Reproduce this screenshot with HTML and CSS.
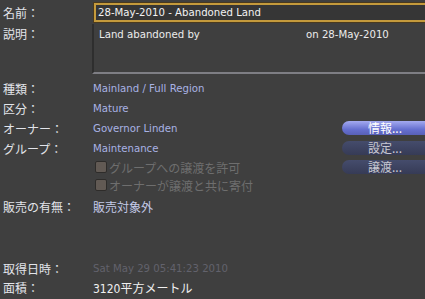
FILE: index.html
```html
<!DOCTYPE html>
<html lang="ja">
<head>
    <meta charset="UTF-8">
    <title>土地情報</title>
    <link rel="stylesheet" href="styles.css">
</head>
<body>
    <div class="panel">
        <div class="row row-name">
            <span class="label">名前：</span>
            <div class="name-field">28-May-2010 - Abandoned Land</div>
        </div>
        <div class="row row-desc">
            <span class="label">説明：</span>
            <div class="desc-field">
                <span class="desc-text">Land abandoned by</span>
                <span>on 28-May-2010</span>
            </div>
        </div>

        <div class="info">
            <div class="line">
                <span class="label">種類：</span>
                <span class="value">Mainland / Full Region</span>
            </div>
            <div class="line">
                <span class="label">区分：</span>
                <span class="value">Mature</span>
            </div>
            <div class="line">
                <span class="label">オーナー：</span>
                <span class="value">Governor Linden</span>
                <button class="btn btn-active">情報...</button>
            </div>
            <div class="line">
                <span class="label">グループ：</span>
                <span class="value">Maintenance</span>
                <button class="btn">設定...</button>
            </div>
            <div class="line line-check">
                <span></span>
                <label class="check"><span class="box"></span>グループへの譲渡を許可</label>
                <button class="btn">譲渡...</button>
            </div>
            <div class="line line-check">
                <span></span>
                <label class="check"><span class="box"></span>オーナーが譲渡と共に寄付</label>
            </div>
            <div class="line line-sale">
                <span class="label">販売の有無：</span>
                <span class="value value-plain">販売対象外</span>
            </div>
            <div class="line line-claim">
                <span class="label">取得日時：</span>
                <span class="value value-off">Sat May 29 05:41:23 2010</span>
            </div>
            <div class="line line-last">
                <span class="label">面積：</span>
                <span class="value value-white">3120平方メートル</span>
            </div>
        </div>
    </div>
</body>
</html>
```

FILE: styles.css
```css
* {
    margin: 0;
    padding: 0;
    box-sizing: border-box;
}

body {
    background: #3f3f3f;
    color: #dcdcdc;
    font-family: 'DejaVu Sans Condensed', 'DejaVu Sans', 'Noto Sans CJK JP', sans-serif;
    font-size: 11.3px;
    overflow: hidden;
}

.panel {
    width: 425px;
    height: 299px;
    padding-top: 2px;
}

.row {
    display: flex;
}

.label {
    width: 92px;
    padding-left: 3px;
    color: #e2e4ea;
    font-size: 12px;
    white-space: nowrap;
}

.row-name {
    height: 21px;
    align-items: center;
}

.name-field {
    flex: 1;
    height: 19px;
    margin-left: 2px;
    padding: 1px 0 0 2px;
    background: #363636;
    border: 2px solid #c49a3c;
    border-right: none;
    outline: 1px solid #4a3a1e;
    color: #f2f2f2;
    line-height: 14px;
    white-space: nowrap;
}

.row-desc {
    margin-top: 1px;
    height: 50px;
}

.row-desc .label {
    padding-top: 1px;
}

.desc-field {
    flex: 1;
    display: flex;
    padding: 4px 0 0 5px;
    border-left: 2px solid #2e2e2e;
    border-bottom: 2px solid #7e7e84;
    color: #ececec;
}

.desc-text {
    width: 207px;
}

.info {
    margin-top: 4px;
}

.line {
    display: grid;
    grid-template-columns: 92px 1fr 83px;
    align-items: center;
    height: 20px;
}

.line .value {
    padding-left: 1px;
    color: #a8b2e4;
    white-space: nowrap;
}

.value-plain {
    font-size: 12px;
    color: #c4cae8 !important;
}

.value-off {
    color: #62626c !important;
}

.value-white {
    font-size: 12px;
    color: #f0f0f0 !important;
}

.line-check {
    height: 18px;
}

.check {
    display: flex;
    align-items: center;
    gap: 2px;
    padding-left: 3px;
    color: #6e6e6e;
    font-size: 12px;
    white-space: nowrap;
}

.box {
    width: 12px;
    height: 12px;
    border-radius: 2px;
    background: #625a54;
    border: 1px solid #2e2c2a;
}

.line-sale {
    margin-top: 2px;
}

.line-claim {
    margin-top: 42px;
}

.line-last {
    height: 18px;
}

.btn {
    height: 14px;
    border: none;
    border-radius: 7px 0 0 7px;
    background: linear-gradient(#454c6c, #363b56);
    color: #c8c8d2;
    font-family: 'Noto Sans CJK JP', sans-serif;
    font-size: 12px;
    line-height: 14px;
    text-align: left;
    padding-left: 26px;
}

.btn-active {
    background: linear-gradient(#a4aaf0, #6670d0 60%, #5860b8);
    color: #ffffff;
}
```
